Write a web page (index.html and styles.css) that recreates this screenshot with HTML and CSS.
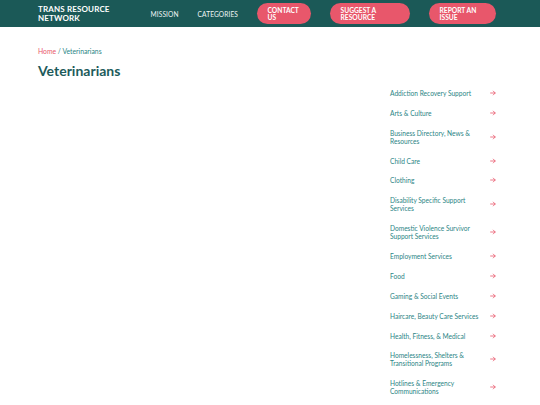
FILE: index.html
```
<!DOCTYPE html>
<html lang="en">
<head>
<meta charset="utf-8">
<title>Veterinarians - Trans Resource Network</title>
<link rel="stylesheet" href="styles.css">
</head>
<body>
<header class="site-header">
  <a class="logo" href="#">TRANS RESOURCE NETWORK</a>
  <nav class="nav">
    <a class="nav-link" href="#">MISSION</a>
    <a class="nav-link" href="#">CATEGORIES</a>
    <a class="btn btn-contact" href="#">CONTACT US</a>
    <a class="btn btn-suggest" href="#">SUGGEST A RESOURCE</a>
    <a class="btn btn-report" href="#">REPORT AN ISSUE</a>
  </nav>
</header>
<main class="main">
  <div class="breadcrumb"><a class="crumb-home" href="#">Home</a> / Veterinarians</div>
  <h1 class="title">Veterinarians</h1>
  <div class="layout">
    <section class="content"></section>
    <aside class="sidebar">
      <ul class="cat-list">
        <li class="cat"><span class="cat-name">Addiction Recovery Support</span><svg class="arrow" viewBox="0 0 6 6"><path d="M0.6 3H5.2M3.3 1.1L5.2 3L3.3 4.9"/></svg></li>
        <li class="cat"><span class="cat-name">Arts &amp; Culture</span><svg class="arrow" viewBox="0 0 6 6"><path d="M0.6 3H5.2M3.3 1.1L5.2 3L3.3 4.9"/></svg></li>
        <li class="cat"><span class="cat-name">Business Directory, News &amp; Resources</span><svg class="arrow" viewBox="0 0 6 6"><path d="M0.6 3H5.2M3.3 1.1L5.2 3L3.3 4.9"/></svg></li>
        <li class="cat"><span class="cat-name">Child Care</span><svg class="arrow" viewBox="0 0 6 6"><path d="M0.6 3H5.2M3.3 1.1L5.2 3L3.3 4.9"/></svg></li>
        <li class="cat"><span class="cat-name">Clothing</span><svg class="arrow" viewBox="0 0 6 6"><path d="M0.6 3H5.2M3.3 1.1L5.2 3L3.3 4.9"/></svg></li>
        <li class="cat"><span class="cat-name">Disability Specific Support Services</span><svg class="arrow" viewBox="0 0 6 6"><path d="M0.6 3H5.2M3.3 1.1L5.2 3L3.3 4.9"/></svg></li>
        <li class="cat"><span class="cat-name">Domestic Violence Survivor Support Services</span><svg class="arrow" viewBox="0 0 6 6"><path d="M0.6 3H5.2M3.3 1.1L5.2 3L3.3 4.9"/></svg></li>
        <li class="cat"><span class="cat-name">Employment Services</span><svg class="arrow" viewBox="0 0 6 6"><path d="M0.6 3H5.2M3.3 1.1L5.2 3L3.3 4.9"/></svg></li>
        <li class="cat"><span class="cat-name">Food</span><svg class="arrow" viewBox="0 0 6 6"><path d="M0.6 3H5.2M3.3 1.1L5.2 3L3.3 4.9"/></svg></li>
        <li class="cat"><span class="cat-name">Gaming &amp; Social Events</span><svg class="arrow" viewBox="0 0 6 6"><path d="M0.6 3H5.2M3.3 1.1L5.2 3L3.3 4.9"/></svg></li>
        <li class="cat"><span class="cat-name">Haircare, Beauty Care Services</span><svg class="arrow" viewBox="0 0 6 6"><path d="M0.6 3H5.2M3.3 1.1L5.2 3L3.3 4.9"/></svg></li>
        <li class="cat"><span class="cat-name">Health, Fitness, &amp; Medical</span><svg class="arrow" viewBox="0 0 6 6"><path d="M0.6 3H5.2M3.3 1.1L5.2 3L3.3 4.9"/></svg></li>
        <li class="cat"><span class="cat-name">Homelessness, Shelters &amp; Transitional Programs</span><svg class="arrow" viewBox="0 0 6 6"><path d="M0.6 3H5.2M3.3 1.1L5.2 3L3.3 4.9"/></svg></li>
        <li class="cat"><span class="cat-name">Hotlines &amp; Emergency Communications</span><svg class="arrow" viewBox="0 0 6 6"><path d="M0.6 3H5.2M3.3 1.1L5.2 3L3.3 4.9"/></svg></li>
      </ul>
    </aside>
  </div>
</main>
</body>
</html>
```
FILE: styles.css
```
* { box-sizing: border-box; }
html, body { margin: 0; padding: 0; }
body {
  font-family: Lato, "Open Sans", sans-serif;
  background: #ffffff;
  color: #1d5b5b;
  overflow: hidden;
}
a { text-decoration: none; color: inherit; }

.site-header {
  height: 27px;
  background: #1b5957;
  display: flex;
  align-items: center;
  padding: 0 44px 0 38px;
}
.logo {
  width: 94px;
  font-size: 8px;
  line-height: 9px;
  font-weight: 700;
  color: #ffffff;
  letter-spacing: 0.15px;
  margin-right: 19px;
}
.nav {
  display: flex;
  align-items: center;
  gap: 19px;
}
.nav-link {
  font-size: 6.6px;
  color: #f0f5f5;
  letter-spacing: 0.1px;
}
.btn {
  display: block;
  height: 21px;
  border-radius: 11px;
  background: #e8576b;
  color: #ffffff;
  font-size: 6.7px;
  line-height: 7px;
  font-weight: 700;
  padding: 3.5px 5px 0 10.5px;
}
.btn-contact { width: 54px; }
.btn-suggest { width: 80px; }
.btn-report { width: 67px; }

.main {
  padding: 20px 44px 0 38px;
}
.breadcrumb {
  height: 9px;
  font-size: 6.8px;
  line-height: 9px;
  color: #2b8585;
}
.crumb-home { color: #e8576b; }
.title {
  margin: 6px 0 0;
  height: 17px;
  font-size: 14px;
  line-height: 17px;
  font-weight: 700;
  color: #1d5b5b;
}
.layout {
  display: flex;
  margin-top: 4px;
}
.content { flex: 1; }
.sidebar { width: 106px; }
.cat-list {
  list-style: none;
  margin: 0;
  padding: 0;
}
.cat {
  display: flex;
  align-items: center;
  gap: 8px;
  padding: 5.95px 0;
}
.cat-name {
  flex: 1;
  font-size: 6.6px;
  line-height: 8px;
  color: #2b8585;
}
.arrow {
  width: 6px;
  height: 6px;
  flex: 0 0 6px;
  fill: none;
  stroke: #e8576b;
  stroke-width: 0.8;
  stroke-linecap: round;
  stroke-linejoin: round;
}
```
